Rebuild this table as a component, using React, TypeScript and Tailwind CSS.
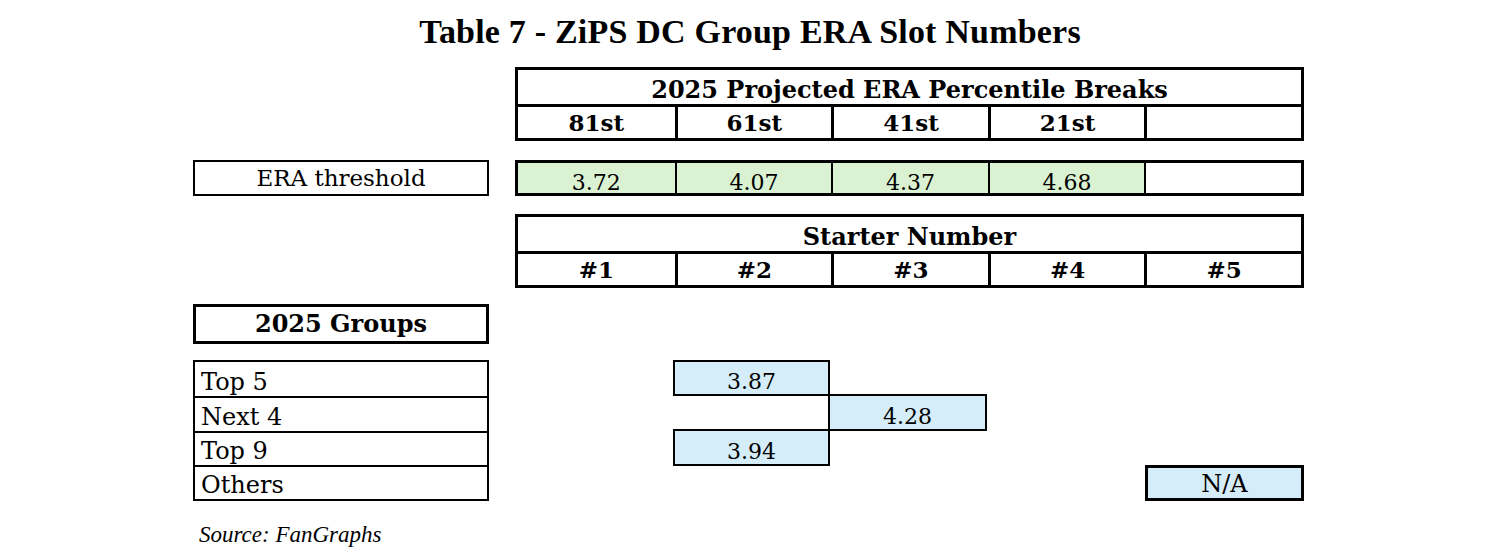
const serif = { fontFamily: '"Liberation Serif", "DejaVu Serif", serif' }
const dv = { fontFamily: '"DejaVu Serif", "Liberation Serif", serif' }

const pct = ['81st', '61st', '41st', '21st', '']
const era = ['3.72', '4.07', '4.37', '4.68', '']
const slots = ['#1', '#2', '#3', '#4', '#5']

function HeaderTable({ title, cells }: { title: string; cells: string[] }) {
  return (
    <div className="w-[789px] border-[3px] border-black" style={dv}>
      <div className="h-[34px] flex items-end justify-center pb-[2px] text-[24px] font-bold leading-none">{title}</div>
      <div className="grid grid-cols-5 border-t-[3px] border-black h-[34px]">
        {cells.map((c, i) => (
          <div key={i} className={`flex items-end justify-center pb-[4px] text-[23px] font-bold leading-none ${i > 0 ? 'border-l-[3px] border-black' : ''}`}>
            {c}
          </div>
        ))}
      </div>
    </div>
  )
}

export default function App() {
  return (
    <div className="w-[1500px] h-[557px] bg-white text-black overflow-hidden" style={serif}>
      <h1 className="pt-[15px] text-center text-[34px] font-bold leading-none tracking-[0.2px]">
        Table 7 - ZiPS DC Group ERA Slot Numbers
      </h1>

      <div className="ml-[193px] w-[1111px] mt-[18px] flex flex-col" style={dv}>
        {/* percentile breaks */}
        <div className="flex justify-end">
          <HeaderTable title="2025 Projected ERA Percentile Breaks" cells={pct} />
        </div>

        {/* ERA threshold */}
        <div className="flex justify-between mt-[19px] h-[36px]">
          <div className="w-[296px] border-2 border-black flex items-end justify-center pb-[4px] text-[23px] leading-none">
            ERA threshold
          </div>
          <div className="w-[789px] border-[3px] border-black grid grid-cols-5">
            {era.map((v, i) => (
              <div key={i} className={`flex items-end justify-center text-[22px] leading-none ${v ? 'bg-[#daf2d2]' : 'bg-white'} ${i > 0 ? 'border-l-2 border-black' : ''}`}>
                <span className="translate-y-[1px]">{v}</span>
              </div>
            ))}
          </div>
        </div>

        {/* starter number */}
        <div className="flex justify-end mt-[18px]">
          <HeaderTable title="Starter Number" cells={slots} />
        </div>

        {/* groups heading */}
        <div className="mt-[16px] w-[296px] h-[40px] border-[3px] border-black flex items-end justify-center pb-[5px] text-[24px] font-bold leading-none">
          2025 Groups
        </div>

        {/* groups rows */}
        <div className="mt-[16px] grid grid-cols-[296px_26px_158px_157px_157px_158px_159px] grid-rows-[36px_35px_35px_35px]">
          <div className="col-start-1 row-start-1 row-span-4 border-2 border-black grid grid-rows-4">
            {['Top 5', 'Next 4', 'Top 9', 'Others'].map((g, i) => (
              <div key={g} className={`flex items-end pl-[6px] pb-[2px] text-[24px] leading-none ${i > 0 ? 'border-t-2 border-black' : ''}`}>
                {g}
              </div>
            ))}
          </div>
          <div className="col-start-4 row-start-1 border-2 border-black bg-[#d5ecf9] flex items-end justify-center pb-[1px] text-[22px] leading-none">
            3.87
          </div>
          <div className="col-start-5 row-start-2 -ml-[2px] -mt-[2px] border-2 border-black bg-[#d5ecf9] flex items-end justify-center pb-[1px] text-[22px] leading-none">
            4.28
          </div>
          <div className="col-start-4 row-start-3 -mt-[2px] border-2 border-black bg-[#d5ecf9] flex items-end justify-center pb-[1px] text-[22px] leading-none">
            3.94
          </div>
          <div className="col-start-7 row-start-4 -mt-[1px] border-[3px] border-black bg-[#d5ecf9] flex items-end justify-center pb-[2px] text-[24px] leading-none">
            N/A
          </div>
        </div>

        <div className="mt-[22px] pl-[6px] text-[23px] italic leading-none" style={serif}>Source: FanGraphs</div>
      </div>
    </div>
  )
}
